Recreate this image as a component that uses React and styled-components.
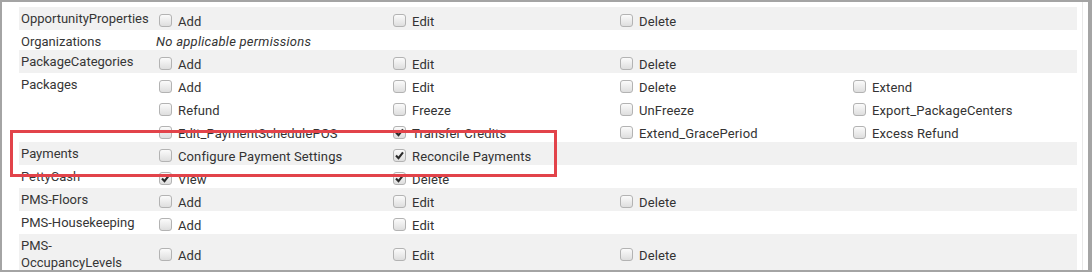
import React from "react";
import styled, { createGlobalStyle } from "styled-components";

const Global = createGlobalStyle`
    html, body {
        margin: 0;
        padding: 0;
        background: #ffffff;
    }
    body {
        font-family: Roboto, "Liberation Sans", Arial, sans-serif;
        font-size: 13px;
        color: #333333;
    }
`

const Frame = styled.div`
    position: relative;
    display: flex;
    box-sizing: border-box;
    width: 1092px;
    height: 272px;
    border: 2px solid #a4a4a4;
    border-right-width: 4px;
    background: #ffffff;
    overflow: hidden;
`
const Table = styled.div`
    display: flex;
    flex-direction: column;
    flex: 1;
    margin: 5px 5px 0 17px;
`
const Gutter = styled.div`
    width: 5px;
    border-left: 1px solid #e8e8e8;
`
const Row = styled.div`
    display: grid;
    grid-template-columns: 136px 1fr;
    background: ${(p) => (p.$striped ? "#f1f1f1" : "#ffffff")};
`
const Label = styled.div`
    align-self: start;
    padding: 3px 4px 0 2px;
    line-height: 17px;
    color: #363636;
`
const Perms = styled.div`
    align-self: center;
    display: grid;
    grid-template-columns: 234px 227px 233px 1fr;
`
const Empty = styled.div`
    align-self: start;
    padding: 3px 0 0 1px;
    line-height: 17px;
    font-style: italic;
    letter-spacing: 0.25px;
    color: #333333;
`
const Item = styled.div`
    display: flex;
    align-items: flex-start;
    box-sizing: border-box;
    height: 23px;
    padding-top: 6px;
    line-height: 17px;
    letter-spacing: 0.12px;
    white-space: nowrap;
`
const Box = styled.span`
    display: flex;
    align-items: center;
    justify-content: center;
    flex: none;
    box-sizing: border-box;
    width: 13px;
    height: 13px;
    margin: 1px 6px 0 4px;
    border: 1px solid #b3b3b3;
    border-radius: 3px;
    background: linear-gradient(#fbfbfb, #dedede);
    svg {
        display: block;
    }
`
const Highlight = styled.div`
    position: absolute;
    left: 8px;
    top: 128px;
    width: 547px;
    height: 47px;
    box-sizing: border-box;
    border: 3px solid #e2434a;
    pointer-events: none;
`

const rows = [
    { name: "OpportunityProperties", items: ["Add", "Edit", "Delete"] },
    { name: "Organizations", items: [] },
    { name: "PackageCategories", items: ["Add", "Edit", "Delete"] },
    {
        name: "Packages",
        items: [
            "Add", "Edit", "Delete", "Extend",
            "Refund", "Freeze", "UnFreeze", "Export_PackageCenters",
            "Edit_PaymentSchedulePOS", "*Transfer Credits", "Extend_GracePeriod", "Excess Refund",
        ],
    },
    { name: "Payments", items: ["Configure Payment Settings", "*Reconcile Payments"] },
    { name: "PettyCash", items: ["*View", "*Delete"] },
    { name: "PMS-Floors", items: ["Add", "Edit", "Delete"] },
    { name: "PMS-Housekeeping", items: ["Add", "Edit"] },
    { name: "PMS-OccupancyLevels", items: ["Add", "Edit", "Delete"] },
]

function Check({ checked }) {
    return (
        <Box>
            {checked && (
                <svg width="9" height="9" viewBox="0 0 9 9">
                    <path d="M1 4.5 L3.5 7.2 L8 1.4" fill="none" stroke="#2a2a2a" strokeWidth="2.1" />
                </svg>
            )}
        </Box>
    )
}

function App() {
    return (
        <>
            <Global />
            <Frame>
                <Table>
                    {rows.map((row, i) => (
                        <Row key={row.name} $striped={i % 2 === 0}>
                            <Label>{row.name}</Label>
                            {row.items.length === 0 ? (
                                <Empty>No applicable permissions</Empty>
                            ) : (
                                <Perms>
                                    {row.items.map((item, j) => {
                                        const checked = item.startsWith("*");
                                        return (
                                            <Item key={j}>
                                                <Check checked={checked} />
                                                {checked ? item.slice(1) : item}
                                            </Item>
                                        )
                                    })}
                                </Perms>
                            )}
                        </Row>
                    ))}
                </Table>
                <Gutter />
                <Highlight />
            </Frame>
        </>
    )
}

export default App;
